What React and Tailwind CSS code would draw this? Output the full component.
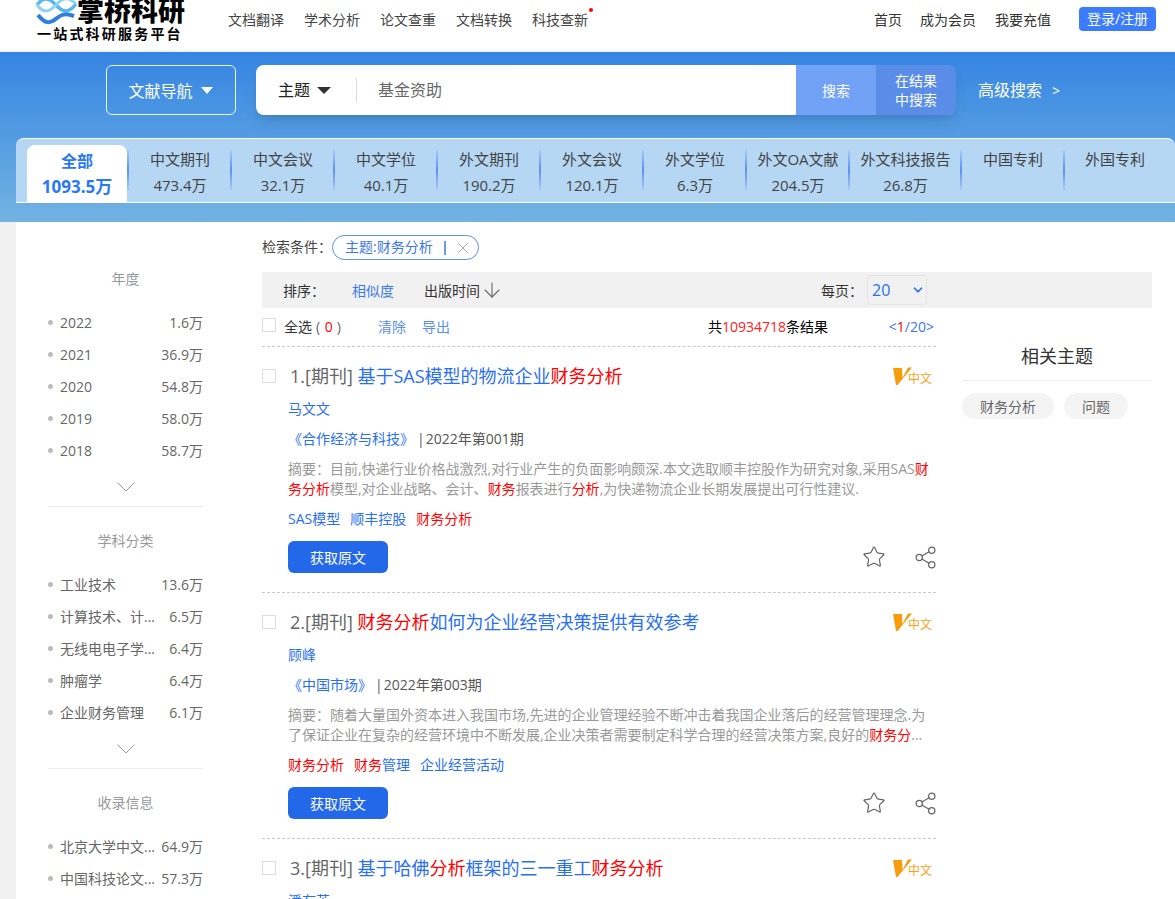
import { ArrowDown, ChevronDown, Share2, Star, X } from 'lucide-react';

const navLeft = ['文档翻译', '学术分析', '论文查重', '文档转换', '科技查新'];
const tabs = [
  { name: '中文期刊', count: '473.4万', width: 'w-[103px]' },
  { name: '中文会议', count: '32.1万', width: 'w-[103px]' },
  { name: '中文学位', count: '40.1万', width: 'w-[103px]' },
  { name: '外文期刊', count: '190.2万', width: 'w-[103px]' },
  { name: '外文会议', count: '120.1万', width: 'w-[103px]' },
  { name: '外文学位', count: '6.3万', width: 'w-[103px]' },
  { name: '外文OA文献', count: '204.5万', width: 'w-[103px]' },
  { name: '外文科技报告', count: '26.8万', width: 'w-[112px]' },
  { name: '中国专利', count: '', width: 'w-[103px]' },
  { name: '外国专利', count: '', width: 'w-[101px]' }
];

const facets = [
  {
    title: '年度',
    rows: [['2022', '1.6万'], ['2021', '36.9万'], ['2020', '54.8万'], ['2019', '58.0万'], ['2018', '58.7万']]
  },
  {
    title: '学科分类',
    rows: [['工业技术', '13.6万'], ['计算技术、计...', '6.5万'], ['无线电电子学...', '6.4万'], ['肿瘤学', '6.4万'], ['企业财务管理', '6.1万']]
  },
  {
    title: '收录信息',
    rows: [['北京大学中文...', '64.9万'], ['中国科技论文...', '57.3万'], ['中国人文社会...', '20.1万']]
  }
];

// text between | marks is the red search hit
const results = [
  {
    no: 1,
    title: '基于SAS模型的物流企业|财务分析|',
    author: '马文文',
    journal: '《合作经济与科技》',
    issue: '2022年第001期',
    summary: '目前,快递行业价格战激烈,对行业产生的负面影响颇深.本文选取顺丰控股作为研究对象,采用SAS|财务分析|模型,对企业战略、会计、|财务|报表进行|分析|,为快递物流企业长期发展提出可行性建议.',
    keywords: ['SAS模型', '顺丰控股', '|财务分析|']
  },
  {
    no: 2,
    title: '|财务分析|如何为企业经营决策提供有效参考',
    author: '顾峰',
    journal: '《中国市场》',
    issue: '2022年第003期',
    summary: '随着大量国外资本进入我国市场,先进的企业管理经验不断冲击着我国企业落后的经营管理理念.为了保证企业在复杂的经营环境中不断发展,企业决策者需要制定科学合理的经营决策方案,良好的|财务分析|能够为企业经营决策提供有效参考,本文对此进行了探讨.',
    keywords: ['|财务分析|', '|财务|管理', '企业经营活动']
  },
  {
    no: 3,
    title: '基于哈佛|分析|框架的三一重工|财务分析|',
    author: '潘有英',
    journal: '《中国市场》',
    issue: '2022年第003期',
    summary: '',
    keywords: []
  }
];

const Marked = ({ text }) =>
  text.split('|').map((part, i) => (
    <span key={i} className={i % 2 ? 'text-[#ff0000]' : undefined}>
      {part}
    </span>
  ));

const Logo = () => (
  <div className="ml-9 w-[192px] h-[50px] shrink-0 overflow-hidden">
    <div className="flex items-center -mt-[5px] h-[32px]">
      <svg width="41" height="32" viewBox="0 0 41 32" fill="none" className="shrink-0">
        <path d="M1 10 C7 2 12 2 20 10 C27 18 33 18 40 9" stroke="#58b7ee" strokeWidth="3.5" />
        <path d="M1 10 C7 18 12 18 20 10 C27 2 33 2 40 9" stroke="#8fd3f4" strokeWidth="3" />
        <path d="M2 20 C9 29 14 29 21 23 C27 18 32 19 38 21" stroke="#2f7fdc" strokeWidth="4" />
      </svg>
      <span className="text-[27px] leading-[32px] font-black text-black whitespace-nowrap">掌桥科研</span>
    </div>
    <div className="ml-px -mt-[3px] text-[14px] leading-[20px] font-bold tracking-[2.2px] text-black whitespace-nowrap">一站式科研服务平台</div>
  </div>
);

const VersionMark = () => (
  <svg width="19" height="18" viewBox="0 0 19 18" className="shrink-0 -mr-1">
    <path d="M0 1 L9 1 L9.5 11 L15 0.5 L19 0.5 L4.5 18 L3 18 Z" fill="#f79d0c" />
  </svg>
);

const Header = () => (
  <header className="flex h-[52px] bg-white border-b-2 border-[#f2f2f2]">
    <Logo />
    <nav className="flex gap-5 h-[38px] items-center text-[14px] text-[#444]">
      {navLeft.map((item) => (
        <span key={item}>{item}</span>
      ))}
    </nav>
    <span className="w-1 h-1 mt-2 ml-[1px] rounded-full bg-[#ff0000]" />
    <div className="ml-auto flex h-[38px] items-center text-[14px] text-[#333]">
      <span>首页</span>
      <span className="ml-[18px]">成为会员</span>
      <span className="ml-[19px]">我要充值</span>
      <button className="ml-7 mr-[19px] w-[77px] h-6 pb-[2px] rounded bg-[#3b7cff] text-white text-[14px]">登录/注册</button>
    </div>
  </header>
);

const Banner = () => (
  <section className="h-[170px] pt-[13px] bg-gradient-to-b from-[#3484e2] to-[#72b3e1]">
    <div className="flex h-[50px] ml-[106px]">
      <button className="w-[130px] h-[50px] pt-px pr-px flex items-center justify-center gap-2 rounded-md border border-white/90 text-white text-[16px]">
        文献导航
        <span className="w-0 h-0 border-x-[6px] border-x-transparent border-t-[7px] border-t-white" />
      </button>
      <div className="ml-5 w-[700px] flex rounded-lg overflow-hidden shadow-lg">
        <div className="flex-1 flex items-center bg-white">
          <span className="ml-[22px] text-[16px] text-[#222]">主题</span>
          <span className="ml-[7px] w-0 h-0 border-x-[7px] border-x-transparent border-t-[7px] border-t-[#333]" />
          <span className="ml-[25px] w-px h-6 bg-[#ddd]" />
          <span className="ml-[21px] text-[16px] text-[#666]">基金资助</span>
        </div>
        <button className="w-20 bg-[#72a2f5] text-white text-[14px]">搜索</button>
        <button className="w-20 bg-[#5a8de8] text-white text-[14px] leading-[19px]">
          在结果
          <br />
          中搜索
        </button>
      </div>
      <div className="ml-[22px] flex items-center text-white text-[16px]">
        高级搜索
        <span className="ml-[10px] text-[14px]">&gt;</span>
      </div>
    </div>
    <div className="flex ml-4 mt-[23px] h-[65px] pl-[11px] bg-[#b5d7f4] border-y border-white rounded-tl-lg rounded-tr-lg">
      <div className="w-[100px] -mb-px mt-[6px]">
        <div className="h-[58px] pt-[3px] bg-white rounded-t-lg text-center font-bold leading-[26px] text-[#2a78f5]">
          <div className="text-[16px]">全部</div>
          <div className="text-[17px]">1093.5万</div>
        </div>
      </div>
      {tabs.map((tab) => (
        <div key={tab.name} className={`flex shrink-0 ${tab.width}`}>
          <span className="w-[2px] h-10 mt-[11px] shrink-0 bg-gradient-to-b from-[#a9c8f5] via-[#5c8ff5] to-[#a9c8f5]" />
          <div className="flex-1 pt-[7px] pl-px text-center text-[15px] leading-[26px] text-[#444] whitespace-nowrap">
            <div>{tab.name}</div>
            <div>{tab.count}</div>
          </div>
        </div>
      ))}
    </div>
  </section>
);

const Facet = ({ facet }) => (
  <div className="pt-[24px] first:pt-[47px]">
    <h3 className="h-5 text-center text-[14px] leading-5 font-normal text-[#999]">{facet.title}</h3>
    <ul className="mt-[17px]">
      {facet.rows.map(([name, count]) => (
        <li key={name} className="flex items-center h-8 text-[14px] text-[#666]">
          <span className="w-[5px] h-[5px] rounded-full bg-[#bbb]" />
          <span className="ml-[7px]">{name}</span>
          <span className="ml-auto">{count}</span>
        </li>
      ))}
    </ul>
    <div className="mt-4 flex justify-center">
      <svg width="18" height="10" viewBox="0 0 18 10" fill="none" stroke="#999" strokeWidth="1">
        <path d="M0.5 0.5 L9 9 L17.5 0.5" />
      </svg>
    </div>
    <div className="mt-[14px] h-px bg-[#ececec]" />
  </div>
);

const Result = ({ item }) => (
  <article className="h-[246px] pt-[15px] border-b border-dashed border-[#c8c8c8]">
    <div className="flex items-center h-7">
      <span className="w-[14px] h-[14px] border border-[#ddd]" />
      <h2 className="ml-[14px] text-[18px] font-normal text-[#2a6ff0] whitespace-nowrap">
        <span className="text-[#666]">{item.no}.[期刊] </span>
        <Marked text={item.title} />
      </h2>
      <div className="ml-auto mr-1 flex items-center">
        <VersionMark />
        <span className="mt-[6px] text-[12px] text-[#f7a21b]">中文</span>
      </div>
    </div>
    <div className="pl-[26px]">
      <div className="mt-[9px] h-5 text-[14px] leading-5 text-[#2a6ff0]">{item.author}</div>
      <div className="mt-[10px] h-5 text-[14px] leading-5 text-[#555]">
        <span className="text-[#2a6ff0]">{item.journal}</span>
        <span className="ml-[3px] mr-[1px]">|</span>
        {item.issue}
      </div>
      <p className="mt-[10px] h-10 text-[14px] leading-5 text-[#999] break-all line-clamp-2">
        摘要：<Marked text={item.summary} />
      </p>
      <div className="mt-[10px] flex gap-[10px] h-5 text-[14px] leading-5 text-[#2a6ff0]">
        {item.keywords.map((word) => (
          <span key={word}>
            <Marked text={word} />
          </span>
        ))}
      </div>
      <div className="mt-3 flex items-center">
        <button className="w-[100px] h-8 rounded-md bg-[#2468ea] text-white text-[14px]">获取原文</button>
        <Star className="ml-auto w-6 h-6 text-[#666]" strokeWidth={1.2} />
        <Share2 className="ml-[27px] -mr-[2px] w-[25px] h-[25px] text-[#666]" strokeWidth={1.2} />
      </div>
    </div>
  </article>
);

export default function App() {
  return (
    <div className="h-[899px] overflow-hidden bg-white font-['Open_Sans','Noto_Sans_CJK_SC',sans-serif]">
      <Header />
      <Banner />
      <div className="flex">
        <div className="w-4 h-[677px] shrink-0 bg-[#f1f1f1]" />
        <aside className="ml-8 w-[155px] shrink-0">
          {facets.map((facet) => (
            <Facet key={facet.title} facet={facet} />
          ))}
        </aside>
        <main className="ml-[59px] w-[890px] shrink-0">
          <div className="flex items-center pt-[13px] text-[14px] text-[#444]">
            <span className="pb-[2px]">检索条件：</span>
            <span className="flex items-center h-[25px] w-[147px] pl-3 pb-[2px] rounded-full border border-[#5b8fe8] text-[#3b78e8]">
              主题:财务分析
              <span className="ml-[11px] mt-[2px] w-0.5 h-3.5 bg-[#6d9be8]" />
              <X className="ml-2 mt-[2px] w-[18px] h-[18px] text-[#888]" strokeWidth={1} />
            </span>
          </div>
          <div className="mt-3 flex items-center h-9 pl-[21px] bg-[#f1f1f1] text-[14px] text-[#333]">
            排序：
            <span className="ml-[27px] text-[#3b78e8]">相似度</span>
            <span className="ml-[30px]">出版时间</span>
            <ArrowDown className="w-6 h-6 text-[#666]" strokeWidth={1.1} />
            <span className="ml-[317px]">每页：</span>
            <div className="ml-1 flex items-center justify-between w-[60px] h-[30px] pl-[4px] pr-[1px] rounded border border-[#e4e4e4] text-[16px] text-[#2a6ff0]">
              20
              <ChevronDown className="w-[14px] h-[14px]" strokeWidth={3} />
            </div>
          </div>
          <div className="flex gap-[26px]">
            <div className="w-[674px] shrink-0">
              <div className="flex items-center h-[39px] pb-[2px] border-b border-dashed border-[#c8c8c8] text-[14px] text-[#333]">
                <span className="w-[14px] h-[14px] -mt-[2px] border border-[#ddd]" />
                <span className="ml-2 w-[60px] whitespace-nowrap">
                  全选<span className="ml-1 text-[#666]">( </span>
                  <span className="ml-px text-[#ff0000]">0</span>
                  <span className="ml-1 text-[#666]">)</span>
                </span>
                <span className="ml-[34px] text-[#5b8fe8]">清除</span>
                <span className="ml-4 text-[#5b8fe8]">导出</span>
                <span className="ml-[258px] text-black">
                  共<span className="text-[#ff2020]">10934718</span>条结果
                </span>
                <span className="ml-auto mr-[2px] text-[#3b78e8]">
                  &lt;<span className="text-[#ff0000]">1</span>/20&gt;
                </span>
              </div>
              {results.map((item) => (
                <Result key={item.no} item={item} />
              ))}
            </div>
            <div className="w-[190px] shrink-0">
              <div className="mt-9 pb-3 border-b border-[#ececec] text-center text-[18px] leading-6 text-[#333]">相关主题</div>
              <div className="mt-3 flex gap-[10px] text-[14px] text-[#666]">
                <span className="flex items-center justify-center w-[92px] h-[26px] rounded-full bg-[#f4f4f4]">财务分析</span>
                <span className="flex items-center justify-center w-16 h-[26px] rounded-full bg-[#f4f4f4]">问题</span>
              </div>
            </div>
          </div>
        </main>
      </div>
    </div>
  );
}
